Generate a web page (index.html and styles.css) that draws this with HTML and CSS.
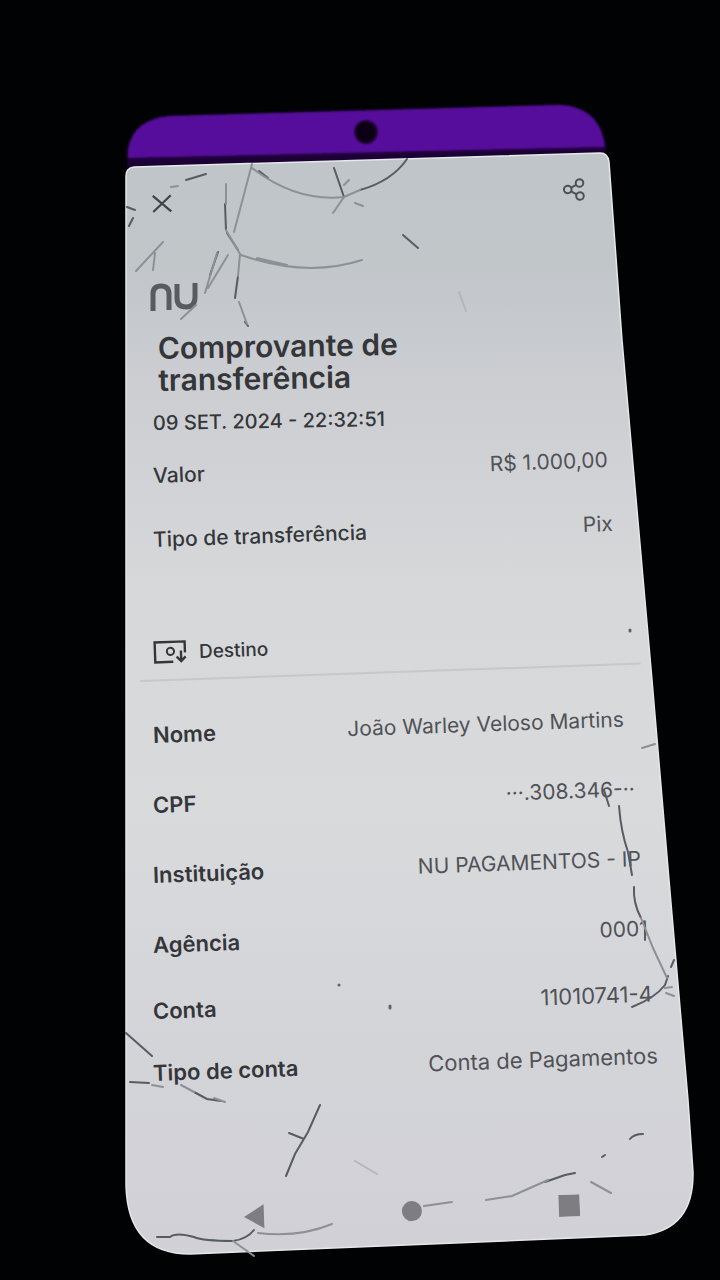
FILE: index.html
```html
<!DOCTYPE html>
<html lang="pt-BR">
<head>
<meta charset="utf-8">
<meta name="viewport" content="width=device-width, initial-scale=1">
<title>Comprovante de transferência</title>
<link rel="stylesheet" href="styles.css">
</head>
<body>
<main class="phone">
  <svg class="phone-body" viewBox="0 0 720 1280" preserveAspectRatio="none" aria-hidden="true">
    <defs>
      <linearGradient id="glass" x1="0" y1="0" x2="0" y2="1">
        <stop offset="0" stop-color="#bfc5c8"/>
        <stop offset=".1" stop-color="#c1c6c9"/>
        <stop offset=".2" stop-color="#cbcdd1"/>
        <stop offset=".4" stop-color="#d6d8da"/>
        <stop offset=".6" stop-color="#d9dadc"/>
        <stop offset=".82" stop-color="#d3d4d8"/>
        <stop offset="1" stop-color="#d1d0d7"/>
      </linearGradient>
      <filter id="soft"><feGaussianBlur stdDeviation="1.3"/></filter>
    </defs>
    <path d="M127 168V152Q132 119 170 116L560 105Q601 107 606 148V156Z" fill="#1b0534" filter="url(#soft)"/>
    <path d="M128 158V150Q133 119 170 116L560 105Q600 107 605 147Z" fill="#570d9c" filter="url(#soft)"/>
    <circle cx="366" cy="132" r="11.500" fill="#0d0216" filter="url(#soft)"/>
    <path d="M535 125h8M576 125h8" stroke="#3d0874" stroke-width="8" stroke-linecap="round" filter="url(#soft)"/>
    <path d="M126 176Q126 168 134 167L600 153Q608 153 609 162L622 340L652 680L669 880L688 1100L693 1172Q694 1228 645 1235L190 1254Q128 1254 126 1186Z" fill="url(#glass)" stroke="#e4e8e8" stroke-width="1.500"/>
  </svg>

  <div class="screen">
    <header class="topbar tilt">
      <button class="icon-button" type="button" aria-label="Fechar">
        <svg width="22" height="22" viewBox="0 0 22 22"><path d="M2 3 20 19M20 3 2 19" stroke="#3f4448" stroke-width="2.200" fill="none"/></svg>
      </button>
      <button class="icon-button" type="button" aria-label="Compartilhar">
        <svg width="26" height="26" viewBox="0 0 26 26" fill="none" stroke="#4a5154" stroke-width="2"><circle cx="6" cy="13" r="3.800"/><circle cx="18" cy="7" r="3.800"/><circle cx="18" cy="20" r="3.800"/><path d="M9.500 11.300 14.600 8.700M9.300 15 14.700 18.200"/></svg>
      </button>
    </header>

    <svg class="brand" width="50" height="30" viewBox="0 0 50 30" role="img" aria-label="Nu" fill="none" stroke="#585b60">
      <path d="M4 29V12Q4 4 12 4Q20 4 20 12V28" stroke-width="5"/>
      <path d="M28 2V16Q28 25 37 25Q46 25 46 15V1" stroke-width="5"/>
    </svg>

    <h1 class="title">Comprovante de<br>transferência</h1>
    <p class="date">09 SET. 2024 - 22:32:51</p>

    <dl class="rows summary">
      <div class="row tilt"><dt>Valor</dt><dd>R$ 1.000,00</dd></div>
      <div class="row tilt"><dt>Tipo de transferência</dt><dd>Pix</dd></div>
    </dl>

    <h2 class="section tilt">
      <svg width="34" height="24" viewBox="0 0 34 24" fill="none" stroke="#34373a" stroke-width="2.400"><path d="M20 22H2V2H32V13"/><circle cx="17.500" cy="11.500" r="3.600" stroke-width="2"/><path d="M28 11V21M23.500 17 28 21.500 32.500 17"/></svg>
      Destino
    </h2>

    <dl class="rows details">
      <div class="row tilt"><dt>Nome</dt><dd>João Warley Veloso Martins</dd></div>
      <div class="row tilt"><dt>CPF</dt><dd>···.308.346-··</dd></div>
      <div class="row tilt"><dt>Instituição</dt><dd>NU PAGAMENTOS - IP</dd></div>
      <div class="row tilt"><dt>Agência</dt><dd>0001</dd></div>
      <div class="row tilt compact"><dt>Conta</dt><dd>11010741-4</dd></div>
      <div class="row tilt compact"><dt>Tipo de conta</dt><dd>Conta de Pagamentos</dd></div>
    </dl>

    <nav class="system-nav tilt" aria-label="Sistema">
      <button class="icon-button" type="button" aria-label="Voltar"><svg width="22" height="26" viewBox="0 0 22 26"><path d="M21 1V25L1 13Z" fill="#7d7d82"/></svg></button>
      <button class="icon-button" type="button" aria-label="Início"><svg width="22" height="22" viewBox="0 0 22 22"><circle cx="11" cy="11" r="10" fill="#7d7d82"/></svg></button>
      <button class="icon-button" type="button" aria-label="Recentes"><svg width="22" height="22" viewBox="0 0 22 22"><path d="M1 0H22V22H1Z" fill="#7d7d82"/></svg></button>
    </nav>
  </div>

  <svg class="cracks" viewBox="0 0 720 1280" preserveAspectRatio="none" aria-hidden="true" fill="none" stroke-linecap="round">
    <g stroke="#565c61" stroke-width="2">
      <path d="M186 180 206 174M225 204 226 230M227 233 238 250M218 252 210 275M238 276 235 298M245 322 248 326M259 171 268 178M334 168 344 197M360 190Q392 181 407 159M403 235 418 248M127 207 135 210M133 218 129 226"/>
      <path d="M619 806Q621 832 628 852L632 875M634 887Q633 903 641 918M645 925 645 940M604 790 609 806M674 960 671 967M668 976 665 985Q655 998 632 1007"/>
      <path d="M126 1033 152 1056M130 1082 149 1083M194 1092 207 1099 221 1101M320 1105 308 1132 295 1154 286 1176M289 1133 304 1139"/>
      <path d="M157 1237H170Q176 1232 194 1237 203 1241 233 1241 247 1239 254 1230M545 1182 565 1175 575 1173M602 1157 605 1155M630 1139Q634 1134 643 1134"/>
    </g>
    <g stroke="#8b9195" stroke-width="2">
      <path d="M252 164 234 232M226 184V204M226 230 240 254 238 276M239 302 247 324M217 253 205 293M228 255 208 288M196 305 181 319M163 242 136 271M155 253 153 270M171 187 178 186M252 168Q296 202 344 197L360 190M344 197 333 213M355 203 363 206M241 255Q307 278 362 260M257 258 287 265M344 185 349 180"/>
      <path d="M642 748 655 744M641 918 653 948 667 978M665 988 672 987M666 993 674 996M152 1085 163 1087M181 1085 194 1092M214 1098 225 1102M233 1241 254 1256M258 1233Q298 1238 332 1224M424 1206 452 1202M486 1200 512 1196 548 1180M591 1182 611 1193"/>
    </g>
    <path d="M459 292 466 311M355 1161 377 1174" stroke="#b2b7bb" stroke-width="2"/>
    <path d="M630 630v1M390 1006v2M339 985v0" stroke="#5f6468" stroke-width="3"/>
  </svg>
</main>
</body>
</html>
```
FILE: styles.css
```css
* {
  box-sizing: border-box;
}

body {
  margin: 0;
  background: #010203;
  color: #34363a;
  font-family: Inter, "Liberation Sans", sans-serif;
}

.phone {
  position: relative;
  min-height: 100vh;
  overflow: hidden;
}

.phone-body,
.cracks {
  position: absolute;
  inset: 0;
  width: 100%;
  height: 100%;
}

.cracks {
  pointer-events: none;
}

.screen {
  position: relative;
  display: flex;
  flex-direction: column;
  padding: 180px 15.600% 40px 21.200%;
}

.tilt {
  transform: rotate(-2deg);
  transform-origin: left center;
}

.icon-button {
  display: flex;
  align-items: center;
  justify-content: center;
  margin: 0;
  padding: 0;
  border: 0;
  background: none;
}

.topbar {
  display: flex;
  align-items: center;
  justify-content: space-between;
  height: 48px;
  margin: 0 20px 0 -2px;
}

.brand {
  margin: 54px 0 0 -4px;
}

.title,
.date {
  transform: rotate(-1deg);
  transform-origin: left center;
}

.title {
  margin: 20px 0 0 5px;
  font-size: 30px;
  font-weight: 600;
  line-height: 32px;
}

.date {
  margin: 11px 0 4px;
  font-size: 20px;
  font-weight: 500;
  line-height: 32px;
}

.rows {
  margin: 0;
}

.row {
  display: flex;
  align-items: center;
  justify-content: space-between;
  height: 64px;
  font-size: 21px;
  white-space: nowrap;
}

.row dt {
  font-weight: 500;
}

.row dd {
  margin: 0;
  color: #505257;
}

.section {
  display: flex;
  align-items: center;
  gap: 12px;
  height: 56px;
  margin: 55px -32px 18px -14px;
  padding-left: 14px;
  border-bottom: 2px solid #c6c8cb;
  font-size: 19px;
  font-weight: 500;
}

.details .row {
  height: 70px;
}

.details .row.compact {
  height: 62px;
}

.details dt {
  font-size: 22px;
  font-weight: 600;
}

.details .compact dd {
  font-size: 22px;
}

/* The sheet widens towards the bottom, so the value column follows its edge. */
.row:nth-child(2) { margin-right: -5px; }
.details .row:nth-child(1) { margin-right: -16px; }
.details .row:nth-child(2) { margin-right: -27px; }
.details .row:nth-child(3) { margin-right: -33px; }
.details .row:nth-child(4) { margin-right: -40px; }
.details .row:nth-child(5) { margin-right: -45px; }
.details .row:nth-child(6) { margin-right: -50px; }

.system-nav {
  display: flex;
  align-items: center;
  justify-content: space-between;
  height: 32px;
  margin: 97px 28px 0 90px;
}
```
